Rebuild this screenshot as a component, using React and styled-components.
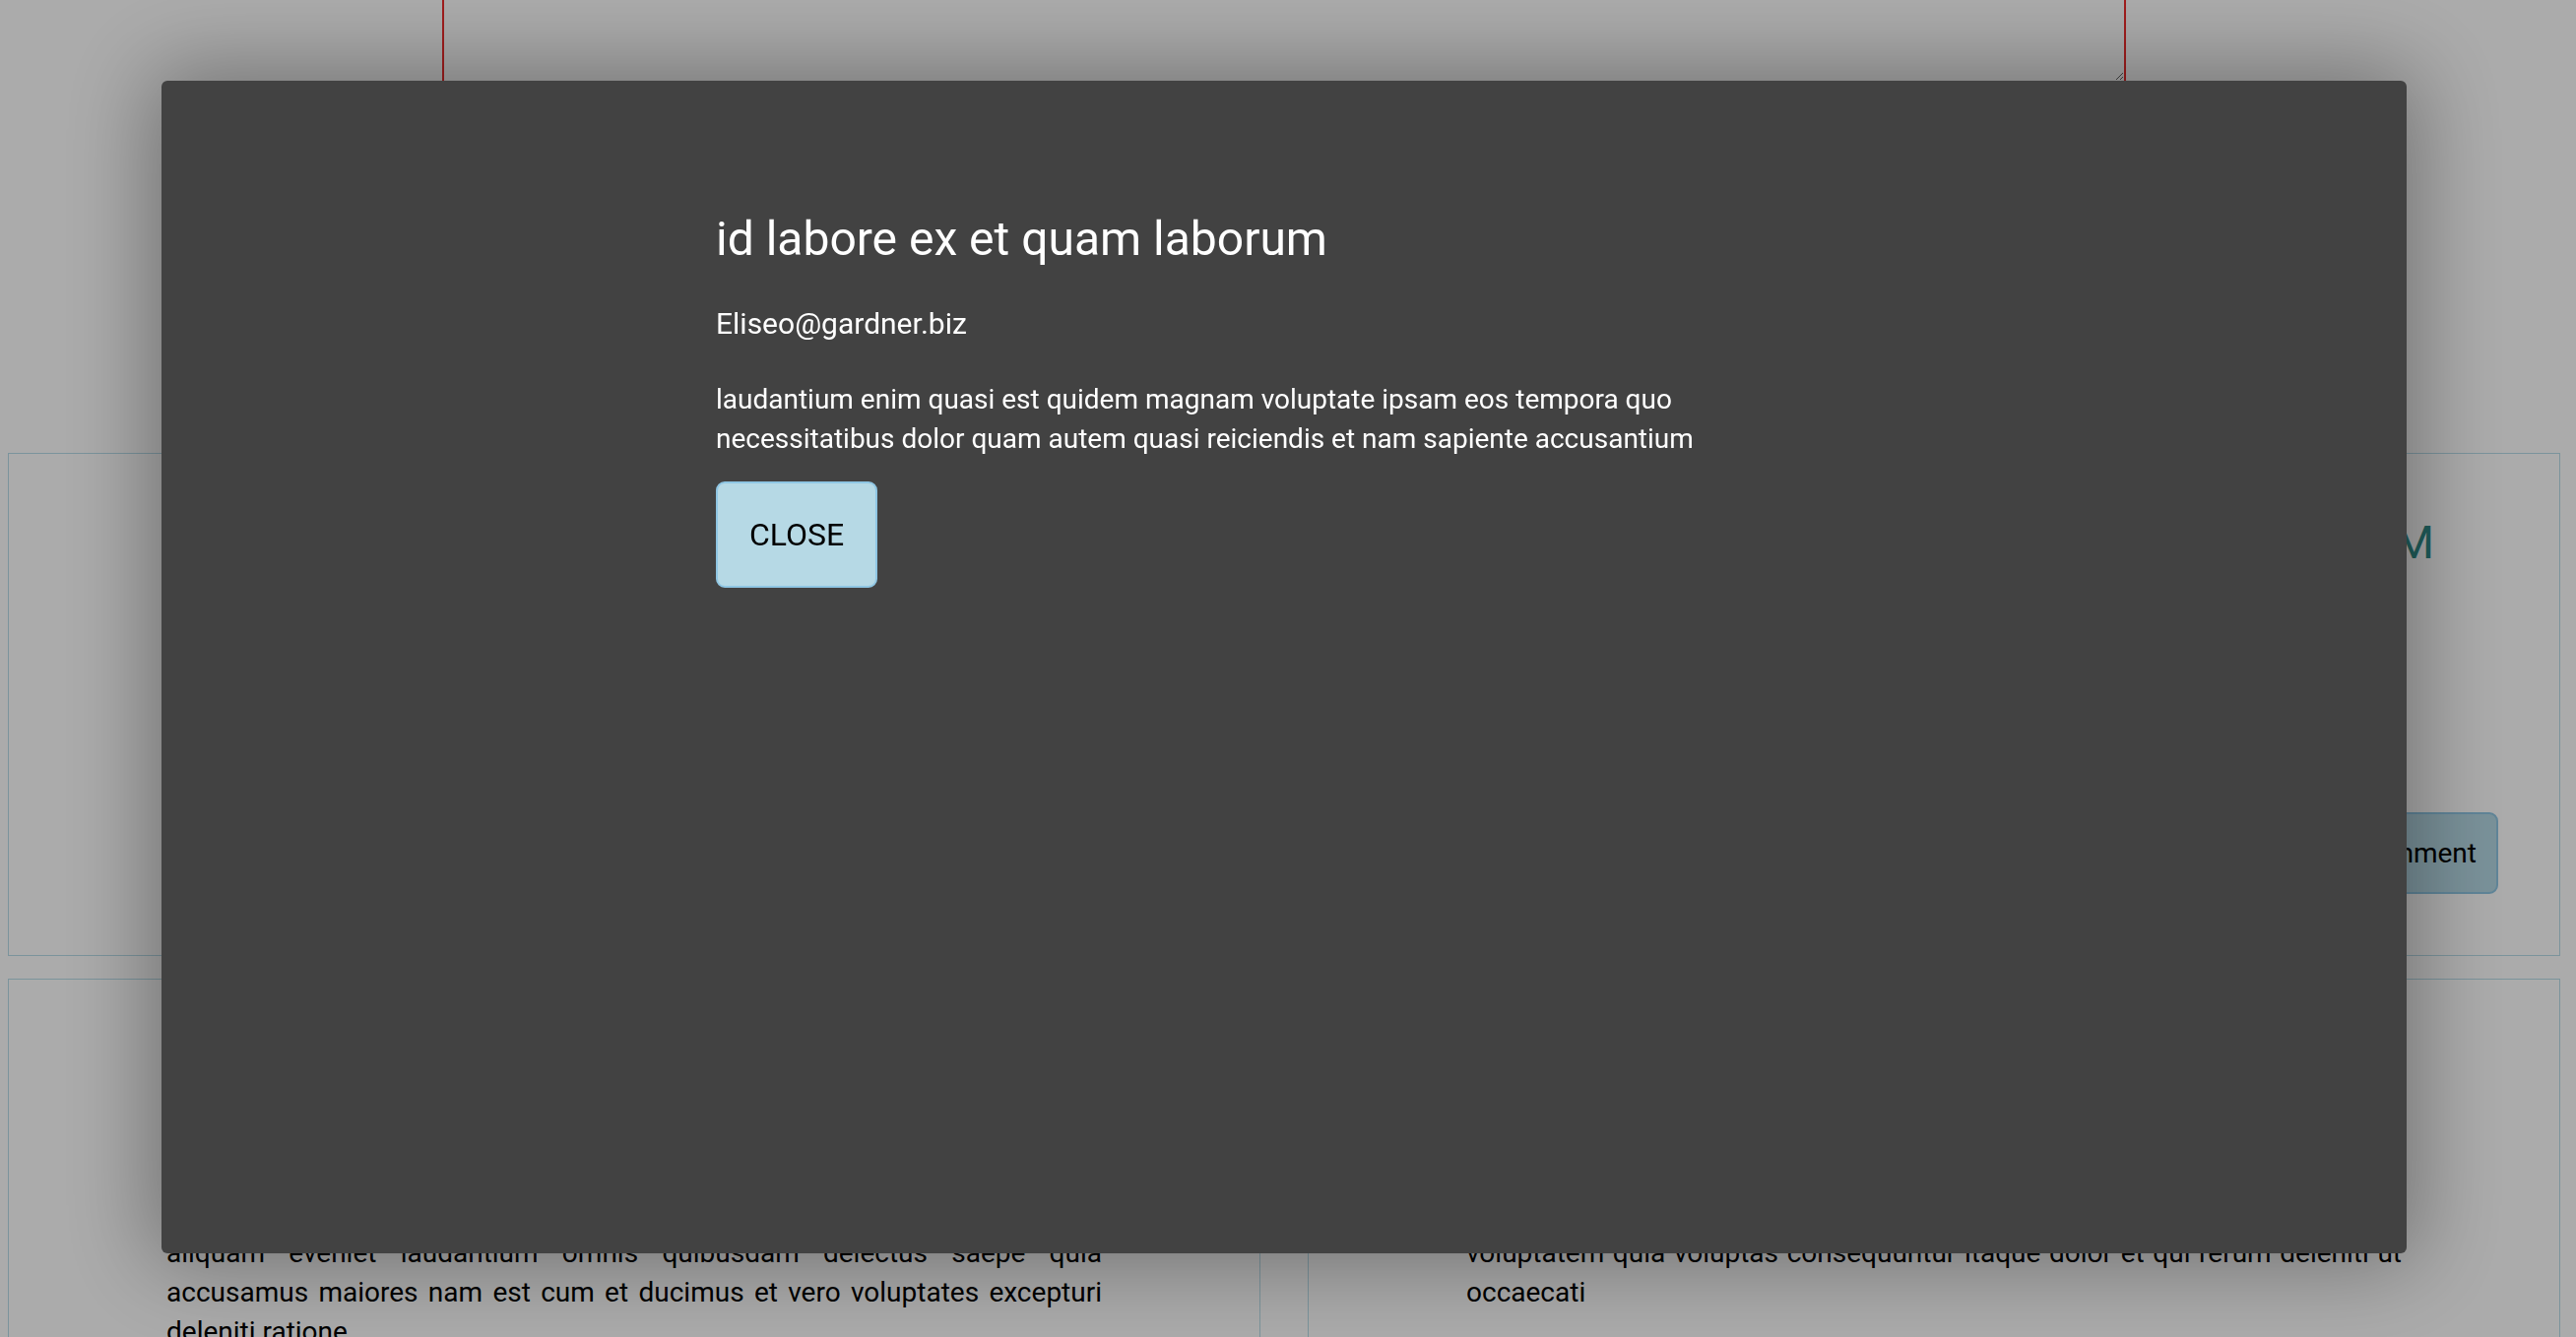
import React, { useState } from 'react';
import styled, { createGlobalStyle } from 'styled-components';

const comments = [
  {
    id: 1,
    name: 'id labore ex et quam laborum',
    email: 'Eliseo@gardner.biz',
    body: 'laudantium enim quasi est quidem magnam voluptate ipsam eos tempora quo necessitatibus dolor quam autem quasi reiciendis et nam sapiente accusantium'
  },
  {
    id: 2,
    name: 'quo vero reiciendis velit similique earum',
    email: 'Jayne_Kuhic@sydney.com',
    body: 'est natus enim nihil est dolore omnis voluptatem numquam et omnis occaecati quod ullam at voluptatem error expedita pariatur nihil sint nostrum voluptatem reiciendis et'
  },
  {
    id: 3,
    name: 'odio adipisci rerum aut animi',
    email: 'Nikita@garfield.biz',
    body: 'quia molestiae reprehenderit quasi aspernatur aut expedita occaecati aliquam eveniet laudantium omnis quibusdam delectus saepe quia accusamus maiores nam est cum et ducimus et vero voluptates excepturi deleniti ratione'
  },
  {
    id: 4,
    name: 'alias odio sit',
    email: 'Lew@alysha.tv',
    body: 'non et atque occaecati deserunt quas accusantium unde odit nobis qui voluptatem quia voluptas consequuntur itaque dolor et qui rerum deleniti ut occaecati'
  }
];

const App = () => {
  const [selected, setSelected] = useState(comments[0]);
  const [text, setText] = useState('');

  return (
    <>
      <GlobalStyle />
      <Page>
        {/* New comment form */}
        <CommentForm onSubmit={e => e.preventDefault()}>
          <TextArea
            name="comment"
            value={text}
            onChange={e => setText(e.target.value)}
          />
          <Button type="submit">Add Comment</Button>
        </CommentForm>

        {/* Comment cards */}
        <CardGrid>
          {comments.map(c => (
            <Card key={c.id}>
              <CardTitle>{c.name}</CardTitle>
              <CardEmail>{c.email}</CardEmail>
              <CardBody>{c.body}</CardBody>
              <CardFooter>
                <Button onClick={() => setSelected(c)}>View Comment</Button>
              </CardFooter>
            </Card>
          ))}
        </CardGrid>
      </Page>

      {selected && (
        <Overlay>
          <Modal>
            <ModalContent>
              <ModalTitle>{selected.name}</ModalTitle>
              <ModalEmail>{selected.email}</ModalEmail>
              <ModalBody>{selected.body}</ModalBody>
              <CloseButton onClick={() => setSelected(null)}>CLOSE</CloseButton>
            </ModalContent>
          </Modal>
        </Overlay>
      )}
    </>
  );
};

//Component Styles
const GlobalStyle = createGlobalStyle`
  html, body {
    margin: 0;
    background: #ffffff;
    font-family: Roboto, "Noto Sans", Arial, sans-serif;
    overflow: hidden;
  }
`;

const Page = styled.div`
  padding: 0 16px 0 8px;
`;

const CommentForm = styled.form`
  display: flex;
  flex-direction: column;
  align-items: center;
  gap: 40px;
  margin-top: -80px;
`;

const TextArea = styled.textarea`
  display: block;
  box-sizing: border-box;
  width: 66%;
  height: 164px;
  border: 2px solid #ee2c2c;
  font-family: Roboto, sans-serif;
  font-size: 28px;
`;

const Button = styled.button`
  background: #b6d9e5;
  border: 2px solid #8fc6e3;
  border-radius: 9px;
  color: #000;
  font-family: Roboto, sans-serif;
  font-size: 28px;
  padding: 23px 20px;
  line-height: normal;
  cursor: pointer;
`;

const CardGrid = styled.div`
  display: grid;
  grid-template-columns: 1fr 1fr;
  column-gap: 48px;
  row-gap: 23px;
  margin-top: 253px;
`;

const Card = styled.div`
  display: flex;
  flex-direction: column;
  border: 1px solid #b8dde9;
  padding: 62px;
`;

const CardTitle = styled.h3`
  margin: 0 0 26px;
  text-align: center;
  text-transform: uppercase;
  font-size: 47px;
  font-weight: 400;
  line-height: normal;
  color: #2f8c88;
  white-space: nowrap;
`;

const CardEmail = styled.div`
  margin-bottom: 35px;
  text-align: center;
  font-size: 28px;
  line-height: 40px;
  color: #333;
`;

const CardBody = styled.p`
  margin: 0 98px;
  text-align: justify;
  font-size: 28px;
  line-height: 40px;
  color: #000;
`;

const CardFooter = styled.div`
  display: flex;
  justify-content: flex-end;
  margin-top: 26px;
`;

const Overlay = styled.div`
  position: fixed;
  inset: 0;
  background: rgba(0, 0, 0, 0.33);
`;

const Modal = styled.div`
  position: absolute;
  top: 82px;
  left: 164px;
  right: 172px;
  bottom: 85px;
  background: #424242;
  border-radius: 6px;
  box-shadow: 0 0 90px 10px rgba(0, 0, 0, 0.35);
  color: #fff;
`;

const ModalContent = styled.div`
  display: flex;
  flex-direction: column;
  align-items: flex-start;
  max-width: 1100px;
  padding: 132px 0 0 563px;
`;

const ModalTitle = styled.h2`
  margin: 0;
  font-size: 48px;
  font-weight: 400;
  line-height: normal;
`;

const ModalEmail = styled.div`
  margin-top: 40px;
  font-size: 30px;
  line-height: normal;
`;

const ModalBody = styled.p`
  margin: 40px 0 0;
  font-size: 28px;
  line-height: 40px;
`;

const CloseButton = styled(Button)`
  margin-top: 23px;
  font-size: 32px;
  padding: 33px 32px;
`;

export default App;
